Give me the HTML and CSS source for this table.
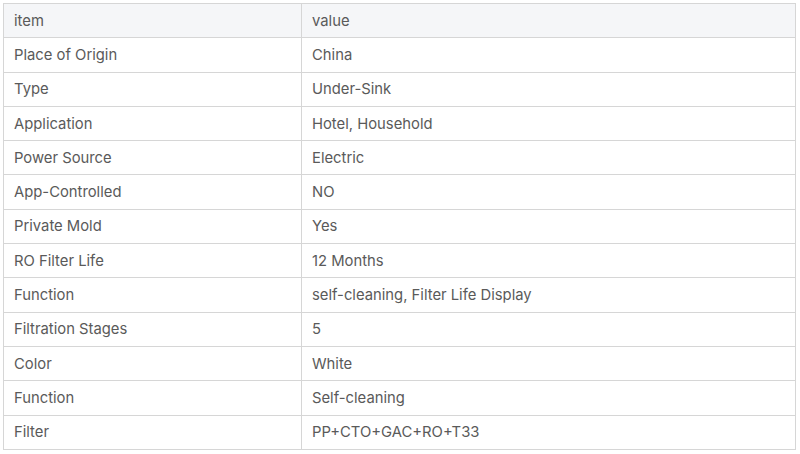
FILE: index.html
```html
<!DOCTYPE html>
<html>
<head>
<meta charset="utf-8">
<link rel="stylesheet" href="styles.css">
</head>
<body>
<div class="wrap">
<table class="spec">
<thead>
<tr><th class="c1">item</th><th>value</th></tr>
</thead>
<tbody>
<tr><td>Place of Origin</td><td>China</td></tr>
<tr><td>Type</td><td>Under-Sink</td></tr>
<tr><td>Application</td><td>Hotel, Household</td></tr>
<tr><td>Power Source</td><td>Electric</td></tr>
<tr><td>App-Controlled</td><td>NO</td></tr>
<tr><td>Private Mold</td><td>Yes</td></tr>
<tr><td>RO Filter Life</td><td>12 Months</td></tr>
<tr><td>Function</td><td>self-cleaning, Filter Life Display</td></tr>
<tr><td>Filtration Stages</td><td>5</td></tr>
<tr><td>Color</td><td>White</td></tr>
<tr><td>Function</td><td>Self-cleaning</td></tr>
<tr><td>Filter</td><td>PP+CTO+GAC+RO+T33</td></tr>
</tbody>
</table>
</div>
</body>
</html>
```
FILE: styles.css
```css
html, body {
  margin: 0;
  padding: 0;
  background: #ffffff;
}
.wrap {
  padding: 3px 4px 0 3px;
}
.spec {
  width: 793px;
  border-collapse: collapse;
  font-family: Inter, "Noto Sans", sans-serif;
  font-size: 14.8px;
  color: #5a5a5a;
  table-layout: fixed;
}
.spec th, .spec td {
  border: 1.5px solid #d6d6d6;
  height: 34.3px;
  padding: 0 10px;
  text-align: left;
  font-weight: 400;
  vertical-align: middle;
  box-sizing: border-box;
}
.spec th {
  background: #f5f6f8;
}
.spec .c1 {
  width: 298px;
}
```
